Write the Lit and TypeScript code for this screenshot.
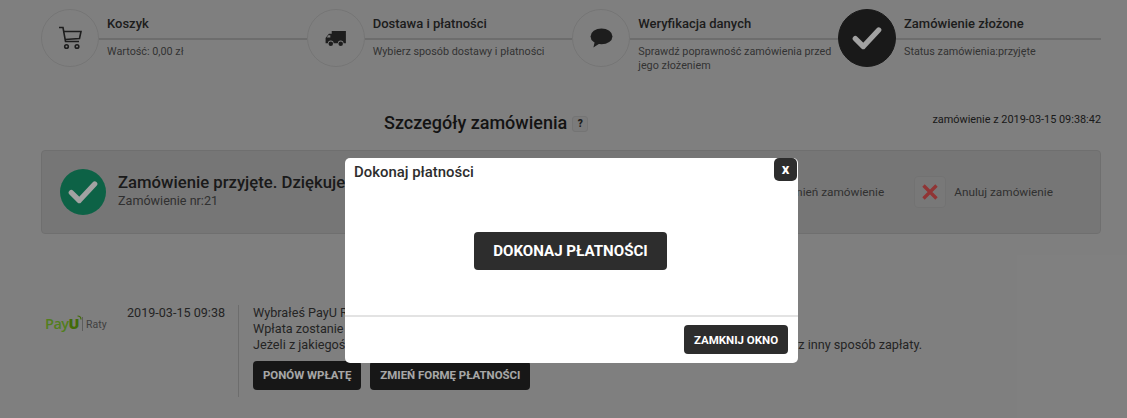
import { LitElement, html, css } from "lit";
import { customElement } from "lit/decorators.js";

const check = html`<svg viewBox="0 0 32 32" class="chk"><path d="M5 16.5 L12.5 24 L27 8.5" fill="none" stroke="currentColor" stroke-width="5" stroke-linecap="round" stroke-linejoin="round"/></svg>`;

@customElement("app-root")
export class AppRoot extends LitElement {
  static styles = css`
    :host { display: block; width: 1127px; height: 418px; overflow: hidden; position: relative; background: #b7b7b7; font-family: Roboto, "Liberation Sans", sans-serif; color: #3a3a3a; }
    .page { box-sizing: border-box; width: 1127px; height: 418px; padding: 9px 26px 0 41px; display: flex; flex-direction: column; }
    .steps { display: flex; height: 60px; }
    .step { flex: none; width: 265.67px; display: flex; }
    .step:last-child { flex: 1; width: auto; }
    .circle { box-sizing: border-box; flex: none; width: 58px; height: 58px; border-radius: 50%; border: 1px solid #a8a8a8; background: #b7b7b7; display: flex; align-items: center; justify-content: center; color: #2a2a2a; }
    .circle.done { background: #252525; border-color: #252525; color: #e8e8e8; }
    .circle.done .chk { width: 34px; height: 34px; }
    .sbody { flex: 1; min-width: 0; }
    .stitle { box-sizing: border-box; height: 31px; border-bottom: 2px solid #9d9d9d; padding: 7px 0 0 8px; font-size: 13px; line-height: 16px; font-weight: 500; color: #2a2a2a; }
    .ssub { padding: 5px 0 0 8px; font-size: 10.8px; line-height: 13.5px; color: #4a4a4a; }
    .headrow { display: flex; height: 50px; margin-top: 31px; }
    .hcenter { flex: 1; display: flex; padding: 12px 0 0 343px; align-items: flex-start; gap: 5px; }
    h1 { margin: 0; font-size: 18px; line-height: 22px; font-weight: 500; color: #1c1c1c; }
    .q { box-sizing: border-box; width: 16px; height: 16px; margin-top: 4px; border: 1px solid #a6a6a6; border-radius: 3px; background: #b0b0b0; font-size: 10px; line-height: 14px; font-weight: 900; text-align: center; color: #2a2a2a; }
    .date { font-size: 10.9px; line-height: 14px; padding-top: 13px; color: #262626; }
    .banner { box-sizing: border-box; height: 84px; border: 1px solid #a0a0a0; border-radius: 4px; background: #aaaaaa; display: flex; align-items: center; padding-left: 18px; }
    .gc { flex: none; width: 46px; height: 46px; border-radius: 50%; background: #138d65; color: #e8e8e8; display: flex; align-items: center; justify-content: center; }
    .gc .chk { width: 34px; height: 34px; }
    .btxt { margin-left: 12px; flex: 1; padding-bottom: 4px; }
    .bt { font-size: 16.7px; line-height: 20px; font-weight: 500; color: #262626; white-space: nowrap; }
    .bs { font-size: 12.6px; line-height: 15px; color: #464646; }
    .acts { display: flex; align-items: center; padding-right: 47px; font-size: 11.8px; color: #464646; }
    .xb { box-sizing: border-box; width: 32px; height: 32px; margin: 0 8px 0 30px; border: 1px solid #a4a4a4; border-radius: 4px; background: #adadad; display: flex; align-items: center; justify-content: center; }
    .pay { display: flex; margin-top: 71px; padding-left: 4px; }
    .logo { width: 82px; flex: none; padding-top: 9px; display: flex; align-items: center; height: 20px; }
    .pu { position: relative; font-family: "Open Sans", sans-serif; font-size: 14.5px; font-weight: 600; line-height: 20px; letter-spacing: -0.5px; color: #76b52c; }
    .pu b { color: #5f9a0c; font-weight: 800; }
    .arc { position: absolute; right: -3px; top: 1px; width: 5px; height: 5px; }
    .sep { width: 1px; height: 14px; background: #868686; margin: 0 3px 0 3px; }
    .raty { font-size: 10.5px; color: #5c5c5c; }
    .pd { width: 111px; flex: none; font-size: 12.6px; line-height: 16px; color: #343434; }
    .pinfo { border-left: 1px solid #9c9c9c; padding: 0 0 0 14px; height: 92px; box-sizing: border-box; font-size: 12.66px; line-height: 16.2px; color: #343434; white-space: nowrap; }
    .plines { margin-bottom: 7px; }
    .pbtns { display: flex; gap: 9px; }
    .btn { box-sizing: border-box; border: 0; border-radius: 4px; background: #2d2d2d; color: #fff; font-family: inherit; font-weight: 700; display: flex; align-items: center; justify-content: center; }
    .sm { height: 29px; font-size: 11.45px; padding: 0 10px; background: #212121; color: #f0f0f0; }
    .overlay { position: absolute; inset: 0; background: rgba(0, 0, 0, .3); }
    .modal { position: absolute; left: 345px; top: 158px; width: 453px; height: 205px; border-radius: 5px; background: #fff; display: flex; flex-direction: column; }
    .mh { height: 29px; padding: 6px 0 0 9px; box-sizing: border-box; font-size: 14.9px; line-height: 17px; font-weight: 500; color: #2d2d2d; }
    .close { position: absolute; right: 1px; top: 0; width: 23px; height: 23px; font-size: 15px; border-radius: 5px; padding-bottom: 3px; }
    .mb { flex: none; height: 130px; box-sizing: border-box; border-bottom: 2px solid #e3e3e3; padding: 45px 2px 0 0; display: flex; justify-content: center; align-items: flex-start; }
    .big { width: 193px; height: 38px; font-size: 15.1px; }
    .mf { flex: 1; display: flex; justify-content: flex-end; padding: 8px 10px 0 0; align-items: flex-start; }
    .zam { width: 104px; height: 29px; font-size: 11.5px; }
  `;

  private step(title: string, sub: unknown, icon: unknown, done = false) {
    return html`<div class="step">
      <div class="circle ${done ? "done" : ""}">${icon}</div>
      <div class="sbody"><div class="stitle">${title}</div><div class="ssub">${sub}</div></div>
    </div>`;
  }

  render() {
    const cart = html`<svg width="24" height="24" viewBox="0 0 24 24" fill="none" stroke="currentColor" stroke-width="1.6"><path d="M1 1.5H5L7.5 15.5H21"/><path d="M5.5 5.5H23L21.5 12.5L7 13.5"/><circle cx="8.5" cy="20.5" r="1.8"/><circle cx="19" cy="20.5" r="1.8"/></svg>`;
    const truck = html`<svg width="21" height="17" viewBox="0 0 22 18" fill="currentColor"><path d="M7 1H22V14H19.5A3 3 0 0 0 13.5 14H9A3 3 0 0 0 3 14H0.5V8.5L4 4H7Z"/><path d="M5.5 5.5H3.4L1.8 8H5.5Z" fill="#b7b7b7"/><circle cx="6" cy="14.5" r="2.4"/><circle cx="16.5" cy="14.5" r="2.4"/></svg>`;
    const bubble = html`<svg width="23" height="20" viewBox="0 0 24 21" fill="currentColor"><ellipse cx="12" cy="8.8" rx="11.5" ry="8.3"/><path d="M5 14L3.5 20.5L12 15Z"/></svg>`;
    return html`
      <div class="page">
        <div class="steps">
          ${this.step("Koszyk", "Wartość: 0,00 zł", cart)}
          ${this.step("Dostawa i płatności", "Wybierz sposób dostawy i płatności", truck)}
          ${this.step("Weryfikacja danych", html`Sprawdź poprawność zamówienia przed<br />jego złożeniem`, bubble)}
          ${this.step("Zamówienie złożone", "Status zamówienia:przyjęte", check, true)}
        </div>
        <div class="headrow">
          <div class="hcenter"><h1>Szczegóły zamówienia</h1><span class="q">?</span></div>
          <div class="date">zamówienie z 2019-03-15 09:38:42</div>
        </div>
        <div class="banner">
          <div class="gc">${check}</div>
          <div class="btxt"><div class="bt">Zamówienie przyjęte. Dziękujemy!</div><div class="bs">Zamówienie nr:21</div></div>
          <div class="acts">
            <span>Zmień zamówienie</span>
            <span class="xb"><svg width="16" height="16" viewBox="0 0 16 16" stroke="#cf4c4c" stroke-width="3.4" fill="none"><path d="M1.5 1.5L14.5 14.5M14.5 1.5L1.5 14.5"/></svg></span>
            <span>Anuluj zamówienie</span>
          </div>
        </div>
        <div class="pay">
          <div class="logo">
            <span class="pu">Pay<b>U</b><svg class="arc" viewBox="0 0 5 5" fill="none" stroke="#5f9a0c" stroke-width="1.2"><path d="M0.5 1C2.5 1 4 2 4 4.5"/></svg></span>
            <span class="sep"></span><span class="raty">Raty</span>
          </div>
          <div class="pd">2019-03-15 09:38</div>
          <div class="pinfo">
            <div class="plines">
              Wybrałeś PayU Raty jako formę płatności.<br />
              Wpłata zostanie zaksięgowana po potwierdzeniu.<br />
              Jeżeli z jakiegoś powodu Twoja płatność się nie powiodła, możesz ponowić wpłatę lub też wybierz inny sposób zapłaty.
            </div>
            <div class="pbtns">
              <button class="btn sm">PONÓW WPŁATĘ</button>
              <button class="btn sm">ZMIEŃ FORMĘ PŁATNOŚCI</button>
            </div>
          </div>
        </div>
      </div>
      <div class="overlay"></div>
      <div class="modal">
        <div class="mh">Dokonaj płatności</div>
        <button class="btn close">x</button>
        <div class="mb"><button class="btn big">DOKONAJ PŁATNOŚCI</button></div>
        <div class="mf"><button class="btn zam">ZAMKNIJ OKNO</button></div>
      </div>
    `;
  }
}
